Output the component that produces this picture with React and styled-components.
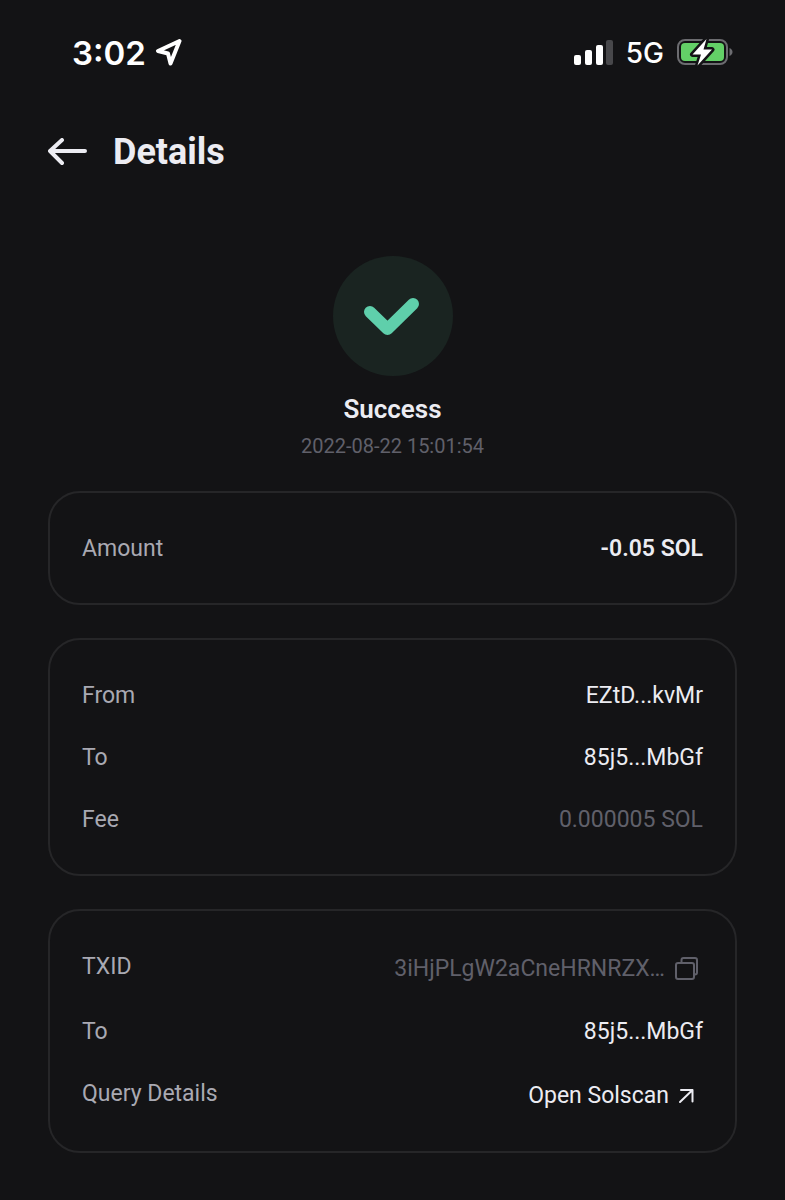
import React from "react";
import styled, { createGlobalStyle } from "styled-components";

const GlobalStyle = createGlobalStyle`
  *, *::before, *::after { box-sizing: border-box; }
  body {
    margin: 0;
    background: #131315;
    color: #ececf2;
    font-family: Roboto, "Liberation Sans", sans-serif;
  }
`;

const Page = styled.div`
  display: flex;
  flex-direction: column;
  min-height: 100vh;
`;

const StatusBar = styled.div`
  display: flex;
  align-items: center;
  justify-content: space-between;
  height: 104px;
  padding: 2px 52px 0 72px;
  color: #fff;
  font-family: Inter, "Liberation Sans", sans-serif;
`;

const StatusGroup = styled.div`
  display: flex;
  align-items: center;
  gap: ${(p) => p.$gap}px;
`;

const Clock = styled.span`
  font-size: 33px;
  font-weight: 600;
  line-height: 40px;
`;

const Network = styled.span`
  font-size: 28px;
  font-weight: 500;
  line-height: 32px;
`;

const Icon = styled.svg`
  display: block;
  flex: none;
  fill: none;
  stroke: currentColor;
  stroke-linecap: round;
  stroke-linejoin: round;
`;

const Header = styled.header`
  display: flex;
  align-items: center;
  gap: 25px;
  height: 96px;
  padding: 0 48px;
`;

const PlainButton = styled.button`
  display: flex;
  padding: 0;
  border: 0;
  background: none;
  color: inherit;
  cursor: pointer;
`;

const Title = styled.h1`
  margin: 0;
  font-size: 36px;
  font-weight: 700;
  line-height: 44px;
`;

const Content = styled.main`
  padding: 56px 48px 46px;
`;

const Summary = styled.section`
  display: flex;
  flex-direction: column;
  align-items: center;
  margin-bottom: 31px;
`;

const Badge = styled.div`
  width: 120px;
  height: 120px;
  border-radius: 50%;
  background: #1a2421;
  color: #5fcfab;
`;

const Status = styled.h2`
  margin: 15px 0 5px;
  font-size: 26px;
  font-weight: 600;
  line-height: 36px;
`;

const Timestamp = styled.time`
  color: #60606a;
  font-size: 20px;
  line-height: 28px;
`;

const Cards = styled.div`
  display: flex;
  flex-direction: column;
  gap: 33px;
`;

const Card = styled.dl`
  margin: 0;
  padding: 24px 32px;
  border: 2px solid #262628;
  border-radius: 32px;
`;

const Row = styled.div`
  display: flex;
  align-items: flex-start;
  justify-content: space-between;
  gap: 24px;
  padding: 18px 0 16px;
  font-size: 23px;
  line-height: 28px;
`;

const Label = styled.dt`
  color: #a9a9b2;
`;

const Value = styled.dd`
  display: flex;
  align-items: center;
  gap: 6px;
  margin: 0;
  color: ${(p) => (p.$muted ? "#60606a" : "#ececf2")};
  font-weight: ${(p) => (p.$strong ? 600 : 400)};
`;

const ValueLink = styled.a`
  display: flex;
  align-items: center;
  gap: 2px;
  color: inherit;
  text-decoration: none;
`;

const LocationIcon = () => (
  <Icon width="28" height="28" viewBox="0 0 28 28" strokeWidth="4" aria-hidden="true">
    <path d="M24.500 2 3 12l10 2.500 2.500 10Z" />
  </Icon>
);

const SignalIcon = () => (
  <Icon width="40" height="26" viewBox="0 0 40 26" aria-hidden="true">
    <g fill="#fff" stroke="none">
      <rect x="1" y="15" width="7" height="10" rx="2" />
      <rect x="12" y="10" width="7" height="15" rx="2" />
      <rect x="23" y="5" width="7" height="20" rx="2" />
      <rect x="33" y="0" width="7" height="25" rx="2" fill="#48484b" />
    </g>
  </Icon>
);

const BatteryIcon = () => (
  <Icon width="56" height="30" viewBox="0 0 56 30" aria-hidden="true">
    <rect x="1" y="2" width="49" height="24" rx="7" stroke="#6c6c70" strokeWidth="2" />
    <rect x="4" y="5" width="43" height="18" rx="4" fill="#63d067" stroke="none" />
    <path d="M52.500 10c4 1.500 4 6.500 0 8Z" fill="#6c6c70" stroke="none" />
    <path
      d="M29.500 1 15.500 16.500h8.500L20.500 27.500 35 11.500h-8.500Z"
      fill="#fff"
      stroke="#131315"
      strokeWidth="5"
      paintOrder="stroke"
    />
  </Icon>
);

const BackIcon = () => (
  <Icon width="40" height="28" viewBox="0 0 40 28" strokeWidth="4" aria-hidden="true">
    <path d="M37 13H2M14 2 2 13l12 12" />
  </Icon>
);

const CheckIcon = () => (
  <Icon width="120" height="120" viewBox="0 0 120 120" strokeWidth="12" aria-hidden="true">
    <path d="M37 56 54.500 73 80 48" />
  </Icon>
);

const CopyIcon = () => (
  <Icon width="32" height="31" viewBox="0 0 32 31" strokeWidth="2" aria-hidden="true">
    <rect x="5" y="10" width="18" height="16" rx="2" />
    <path d="M10.500 9.500V7q0-2 2-2H24q2 0 2 2v12.500q0 2-2 2h-1" />
  </Icon>
);

const OpenIcon = () => (
  <Icon width="32" height="31" viewBox="0 0 32 31" strokeWidth="2" aria-hidden="true">
    <path d="M9 22 21.500 10M10 10h11.500v11.500" />
  </Icon>
);

function Field({ label, children, ...value }) {
  return (
    <Row>
      <Label>{label}</Label>
      <Value {...value}>{children}</Value>
    </Row>
  );
}

export default function App() {
  return (
    <>
      <GlobalStyle />
      <Page>
        <StatusBar>
          <StatusGroup $gap={9}>
            <Clock>3:02</Clock>
            <LocationIcon />
          </StatusGroup>
          <StatusGroup $gap={13}>
            <SignalIcon />
            <Network>5G</Network>
            <BatteryIcon />
          </StatusGroup>
        </StatusBar>
        <Header>
          <PlainButton type="button" aria-label="Back">
            <BackIcon />
          </PlainButton>
          <Title>Details</Title>
        </Header>
        <Content>
          <Summary>
            <Badge>
              <CheckIcon />
            </Badge>
            <Status>Success</Status>
            <Timestamp dateTime="2022-08-22T15:01:54">2022-08-22 15:01:54</Timestamp>
          </Summary>
          <Cards>
            <Card>
              <Field label="Amount" $strong>-0.05 SOL</Field>
            </Card>
            <Card>
              <Field label="From">EZtD...kvMr</Field>
              <Field label="To">85j5...MbGf</Field>
              <Field label="Fee" $muted>0.000005 SOL</Field>
            </Card>
            <Card>
              <Field label="TXID" $muted>
                3iHjPLgW2aCneHRNRZX…
                <PlainButton type="button" aria-label="Copy transaction ID">
                  <CopyIcon />
                </PlainButton>
              </Field>
              <Field label="To">85j5...MbGf</Field>
              <Field label="Query Details">
                <ValueLink href="#solscan">
                  Open Solscan
                  <OpenIcon />
                </ValueLink>
              </Field>
            </Card>
          </Cards>
        </Content>
      </Page>
    </>
  );
}
